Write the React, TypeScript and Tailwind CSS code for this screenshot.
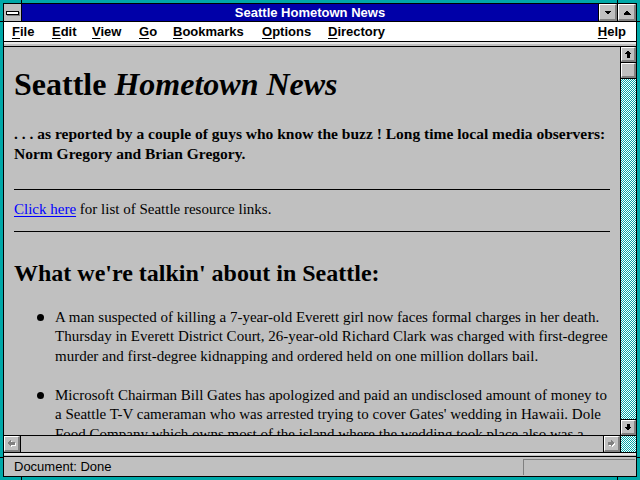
const bevel =
  "bg-[#c0c0c0] border-t border-l border-t-white border-l-white border-r-2 border-b-2 border-r-[#808080] border-b-[#808080]";
const dither =
  "bg-[image:repeating-conic-gradient(#00a8a8_0_25%,#ffffff_0_50%)] bg-[length:2px_2px]";

function Arrow({ dir, disabled }: { dir: "up" | "down" | "left" | "right"; disabled?: boolean }) {
  const pts = {
    up: "3.5,0 7,3.5 5,3.5 5,7 2,7 2,3.5 0,3.5",
    down: "3.5,7 7,3.5 5,3.5 5,0 2,0 2,3.5 0,3.5",
    left: "0,3.5 3.5,0 3.5,2 7,2 7,5 3.5,5 3.5,7",
    right: "7,3.5 3.5,0 3.5,2 0,2 0,5 3.5,5 3.5,7",
  }[dir];
  return (
    <svg width="9" height="9" viewBox="0 0 9 9" shapeRendering="crispEdges">
      {disabled && <polygon points={pts} fill="#ffffff" transform="translate(1.5,1.5)" />}
      <polygon points={pts} fill={disabled ? "#808080" : "#000000"} transform="translate(0.5,0.5)" />
    </svg>
  );
}

function Tri({ up }: { up?: boolean }) {
  return (
    <svg width="8" height="5" viewBox="0 0 8 5" shapeRendering="crispEdges">
      <polygon points={up ? "4,0.5 7.5,4.5 0.5,4.5" : "0.5,0.5 7.5,0.5 4,4.5"} fill="#000" />
    </svg>
  );
}

const menus = [
  { k: "F", rest: "ile", w: "w-[40px]" },
  { k: "E", rest: "dit", w: "w-[40px]" },
  { k: "V", rest: "iew", w: "w-[47px]" },
  { k: "G", rest: "o", w: "w-[34px]" },
  { k: "B", rest: "ookmarks", w: "w-[89px]" },
  { k: "O", rest: "ptions", w: "w-[66px]" },
  { k: "D", rest: "irectory", w: "w-[80px]" },
];

const stories = [
  "A man suspected of killing a 7-year-old Everett girl now faces formal charges in her death. Thursday in Everett District Court, 26-year-old Richard Clark was charged with first-degree murder and first-degree kidnapping and ordered held on one million dollars bail.",
  "Microsoft Chairman Bill Gates has apologized and paid an undisclosed amount of money to a Seattle T-V cameraman who was arrested trying to cover Gates' wedding in Hawaii. Dole Food Company which owns most of the island where the wedding took place also was a party to the settlement.",
];

export default function App() {
  return (
    <div className="relative w-[640px] h-[480px] bg-[#00a8a8] p-[3px] overflow-hidden">
      {/* frame corner ticks */}
      <div className="absolute left-[21px] top-0 w-px h-[3px] bg-black" />
      <div className="absolute left-[617px] top-0 w-px h-[3px] bg-black" />
      <div className="absolute left-[21px] bottom-0 w-px h-[3px] bg-black" />
      <div className="absolute left-[617px] bottom-0 w-px h-[3px] bg-black" />
      <div className="absolute left-0 top-[21px] w-[3px] h-px bg-black" />
      <div className="absolute right-0 top-[21px] w-[3px] h-px bg-black" />
      <div className="absolute left-0 top-[457px] w-[3px] h-px bg-black" />
      <div className="absolute right-0 top-[457px] w-[3px] h-px bg-black" />

      <div className="flex flex-col w-[634px] h-[474px] border border-black bg-[#c0c0c0] font-['Liberation_Sans',Arial,sans-serif]">
        {/* title bar */}
        <div className="flex h-[18px] border-b border-black bg-[#0000a8]">
          <div className="flex items-center justify-center w-[18px] border-r border-black bg-[#c0c0c0]">
            <div className="w-[13px] h-[4px] border border-black bg-white shadow-[1px_1px_0_#808080]" />
          </div>
          <div className="flex-1 text-center text-white font-bold text-[13px] leading-[17px]">
            Seattle Hometown News
          </div>
          <div className="flex border-l border-black">
            <div className={`${bevel} flex items-center justify-center w-[18px] h-[17px]`}>
              <Tri />
            </div>
            <div className="w-px bg-black" />
            <div className={`${bevel} flex items-center justify-center w-[18px] h-[17px]`}>
              <Tri up />
            </div>
          </div>
        </div>

        {/* menu bar */}
        <div className="flex h-[20px] border-b border-black bg-white pl-[8px] text-[13px] leading-[19px] font-bold text-black">
          {menus.map((m) => (
            <span key={m.k} className={m.w}>
              <span className="underline underline-offset-2">{m.k}</span>
              {m.rest}
            </span>
          ))}
          <span className="ml-auto mr-[10px]">
            <span className="underline underline-offset-2">H</span>elp
          </span>
        </div>

        {/* collapsed toolbar */}
        <div className="h-[5px] border-b border-black bg-[#c0c0c0]">
          <div className="h-[2px] bg-[#e8e8e8]" />
        </div>

        {/* document + scrollbars */}
        <div className="flex h-[388px]">
          <div className="flex-1 overflow-hidden px-[10px] font-['Liberation_Serif','Times_New_Roman',serif] text-black">
            <h1 className="mt-[19px] text-[32px] leading-[37px] font-bold whitespace-nowrap">
              Seattle <i>Hometown News</i>
            </h1>
            <p className="mt-[21px] text-[15.5px] leading-[19.5px] font-bold">
              . . . as reported by a couple of guys who know the buzz ! Long time local media
              observers: Norm Gregory and Brian Gregory.
            </p>
            <div className="mt-[26px] h-px bg-black" />
            <p className="mt-[10px] text-[15px] leading-[19.5px]">
              <span className="text-[#0000ff] underline underline-offset-2">Click here</span> for
              list of Seattle resource links.
            </p>
            <div className="mt-[11px] h-px bg-black" />
            <h2 className="mt-[27px] text-[24px] leading-[28px] font-bold whitespace-nowrap">
              What we're talkin' about in Seattle:
            </h2>
            <ul className="mt-[21px] flex flex-col gap-[19.5px] text-[15px] leading-[19.5px]">
              {stories.map((s, i) => (
                <li key={i} className="flex">
                  <div className="w-[41px] shrink-0">
                    <div className="ml-[23px] mt-[6px] w-[7px] h-[7px] rounded-full bg-black" />
                  </div>
                  <span>{s}</span>
                </li>
              ))}
            </ul>
          </div>

          {/* vertical scrollbar */}
          <div className="flex flex-col w-[16px] border-l border-black">
            <div className={`${bevel} flex items-center justify-center h-[15px]`}>
              <Arrow dir="up" />
            </div>
            <div className="h-px bg-black" />
            <div className={`${bevel} h-[15px]`} />
            <div className="h-px bg-black" />
            <div className={`flex-1 ${dither}`} />
            <div className="h-px bg-black" />
            <div className={`${bevel} flex items-center justify-center h-[15px]`}>
              <Arrow dir="down" />
            </div>
          </div>
        </div>

        {/* horizontal scrollbar */}
        <div className="flex h-[17px] border-t border-black">
          <div className={`${bevel} flex items-center justify-center w-[16px]`}>
            <Arrow dir="left" disabled />
          </div>
          <div className="flex-1 border-l border-r border-black bg-[#c0c0c0]" />
          <div className={`${bevel} flex items-center justify-center w-[16px]`}>
            <Arrow dir="right" disabled />
          </div>
          <div className={`w-[16px] border-l border-black ${dither}`} />
        </div>

        {/* separator */}
        <div className="h-[5px] border-t border-b border-black bg-[#c0c0c0]">
          <div className="h-[2px] bg-[#e8e8e8]" />
        </div>

        {/* status bar */}
        <div className="flex items-center flex-1 pl-[10px] text-[13px] text-black">
          <span className="leading-[19px]">Document: Done</span>
          <div className="ml-auto mr-px w-[112px] h-[16px] border-t border-l border-[#808080] border-r-white border-b-white" />
        </div>
      </div>
    </div>
  );
}
